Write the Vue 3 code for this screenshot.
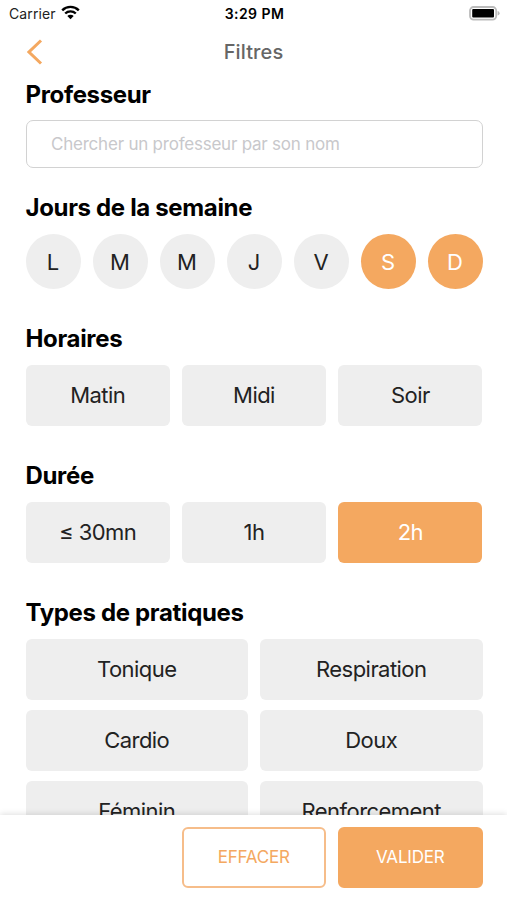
<template>
    <div class="screen">
        <div class="status-bar">
            <div class="carrier">
                <span>Carrier</span>
                <svg width="19" height="15" viewBox="0 0 19 15">
                    <path d="M1.2 5.3 A11.8 11.8 0 0 1 17.8 5.3" />
                    <path d="M4.2 8.5 A7.6 7.6 0 0 1 14.8 8.5" />
                    <path class="dot" d="M6.3 11 A4.6 4.6 0 0 1 12.7 11 L9.5 14.3 Z" />
                </svg>
            </div>
            <span class="time">3:29 PM</span>
            <div class="battery">
                <svg width="31" height="15" viewBox="0 0 31 15">
                    <rect class="shell" x="1" y="1" width="26.2" height="12.6" rx="3.6" />
                    <rect class="level" x="3.2" y="3.1" width="21.8" height="8.4" rx="1" />
                    <path class="tip" d="M28.6 5 Q30.6 5.6 30.6 7.3 Q30.6 9 28.6 9.6 Z" />
                </svg>
            </div>
        </div>

        <header class="header">
            <button class="back" aria-label="Retour">
                <svg width="16" height="26" viewBox="0 0 16 26">
                    <path d="M14 1.5 L2 13 L14 24.5" />
                </svg>
            </button>
            <h1>Filtres</h1>
        </header>

        <main class="filters">
            <section class="teacher">
                <h2>Professeur</h2>
                <input v-model="teacher" type="text" placeholder="Chercher un professeur par son nom">
            </section>
            <section>
                <h2>Jours de la semaine</h2>
                <div class="days">
                    <button v-for="day, i in days" :key="i" class="day" :class="{active: selectedDays.includes(i)}" @click="toggle(selectedDays, i)">{{day}}</button>
                </div>
            </section>
            <section v-for="group in groups" :key="group.title">
                <h2>{{group.title}}</h2>
                <div class="options" :class="{wide: group.wide}">
                    <button v-for="option in group.options" :key="option" class="option" :class="{active: selected.includes(option)}" @click="toggle(selected, option)">
                        <span>{{option}}</span>
                    </button>
                </div>
            </section>
        </main>

        <footer class="footer">
            <button class="clear" @click="clear">EFFACER</button>
            <button class="submit">VALIDER</button>
        </footer>
    </div>
</template>

<script setup>
import { ref } from 'vue'

const days = ['L', 'M', 'M', 'J', 'V', 'S', 'D']
const groups = [
    { title: 'Horaires', options: ['Matin', 'Midi', 'Soir'] },
    { title: 'Durée', options: ['≤ 30mn', '1h', '2h'] },
    { title: 'Types de pratiques', wide: true, options: ['Tonique', 'Respiration', 'Cardio', 'Doux', 'Féminin', 'Renforcement'] }
]

const teacher = ref('')
const selectedDays = ref([5, 6])
const selected = ref(['2h'])

function toggle(list, value) {
    const index = list.indexOf(value)
    if(index > -1){
        list.splice(index, 1)
    }else{
        list.push(value)
    }
}

function clear() {
    teacher.value = ''
    selectedDays.value = []
    selected.value = []
}
</script>

<style>
body{
    margin: 0;
    background: #fff;
}
</style>

<style scoped>
.screen,
.screen *{
    box-sizing: border-box;
}
.screen{
    display: flex;
    flex-direction: column;
    height: 900px;
    overflow: hidden;
    background: #fff;
    color: #000;
    font-family: Inter, "Liberation Sans", sans-serif;
}
button,
input{
    margin: 0;
    padding: 0;
    border: 0;
    font-family: inherit;
}
button{
    cursor: pointer;
}
svg{
    display: block;
    fill: none;
}

.status-bar{
    display: grid;
    grid-template-columns: 1fr auto 1fr;
    align-items: center;
    flex: none;
    height: 27px;
    padding: 0 7px 0 9px;
    font-size: 14px;
}
.carrier{
    display: flex;
    align-items: center;
    gap: 5.5px;
    color: #222;
    letter-spacing: .1px;
}
.carrier svg{
    margin-top: -2px;
}
.carrier path{
    stroke: #000;
    stroke-width: 2.4;
}
.carrier .dot{
    fill: #000;
    stroke: none;
}
.time{
    font-weight: 600;
    letter-spacing: .45px;
}
.battery{
    justify-self: end;
}
.shell{
    stroke: #bbb;
    stroke-width: 1.8;
}
.level{
    fill: #000;
}
.tip{
    fill: #b8b8b8;
}

.header{
    display: grid;
    grid-template-columns: 1fr auto 1fr;
    align-items: center;
    flex: none;
    height: 50px;
    padding: 0 27px;
}
.back{
    justify-self: start;
    background: none;
}
.back path{
    stroke: #f4a860;
    stroke-width: 3;
}
h1{
    margin: 0;
    color: #666;
    font-size: 20px;
    font-weight: 500;
    letter-spacing: .1px;
}

.filters{
    flex: 1;
    min-height: 0;
    overflow: hidden;
    padding: 2.6px 24.5px 0 25.5px;
}
section{
    margin-bottom: 34.4px;
}
h2{
    margin: 0 0 11.5px;
    font-size: 24px;
    line-height: 30px;
    font-weight: 700;
    letter-spacing: -.34px;
}
.teacher{
    margin-bottom: 24.4px;
}
.teacher h2{
    margin-bottom: 10.9px;
}
input{
    display: block;
    width: 100%;
    height: 48px;
    padding: 0 24.5px;
    border: 1px solid #d2d2d2;
    border-radius: 7px;
    color: #222;
    font-size: 17px;
    letter-spacing: -.22px;
}
input::placeholder{
    color: #c8c8cb;
    opacity: 1;
}
.days{
    display: flex;
    justify-content: space-between;
}
.day{
    width: 55px;
    height: 55px;
    border-radius: 50%;
    background: #eee;
    color: #222;
    font-size: 22px;
}
.options{
    display: grid;
    grid-template-columns: repeat(3, 1fr);
    gap: 10px 12px;
}
.options.wide{
    grid-template-columns: repeat(2, 1fr);
}
.option{
    height: 61px;
    padding-bottom: 2px;
    border-radius: 6px;
    background: #eee;
    color: #222;
    font-size: 22px;
    letter-spacing: -.55px;
}
.day.active,
.option.active{
    background: #f4a860;
    color: #fff;
}

.footer{
    display: flex;
    justify-content: flex-end;
    gap: 12px;
    flex: none;
    height: 85.5px;
    padding: 12px 24.5px 0 0;
    background: #fff;
    box-shadow: 0 -1px 6px rgba(0, 0, 0, .13);
    position: relative;
}
.footer button{
    width: 144.5px;
    height: 61px;
    border: 2px solid #f6bd8a;
    border-radius: 6px;
    font-size: 17px;
    letter-spacing: -.2px;
}
.footer .clear{
    background: #fff;
    color: #f4a860;
}
.footer .submit{
    border-color: #f4a860;
    background: #f4a860;
    color: #fff;
}
</style>
